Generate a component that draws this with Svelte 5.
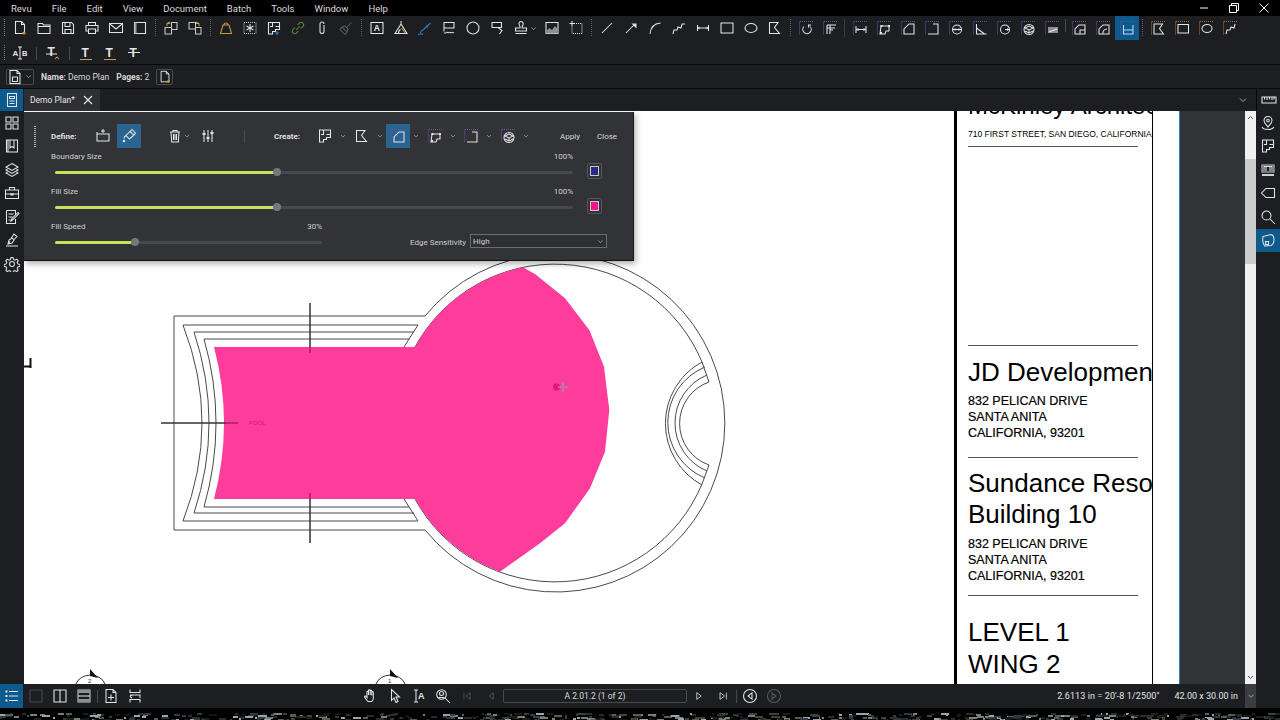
<script>
  const W = '#e4e4e4', D = '#5a5b5e', P = '#6a4fa5', O = '#b56a2c', G = '#c69c3c', B = '#2f7fc4', L = '#b9d9f2';
  const p = (d, c = W, f = false, dash = false) => ({ d, c, f, dash });
  const t = (text, x, y, fs, c = W) => ({ text, x, y, fs, c });
  const circ = (x, y, r) => `M${x - r} ${y}a${r} ${r} 0 1 0 ${2 * r} 0a${r} ${r} 0 1 0 ${-2 * r} 0z`;
  const frame = p('M2 1.5h13M1.5 1.5v13', P, false, true);
  const oframe = p('M2 1.5h13M1.5 1.5v13', O, false, true);

  const icons = {
    newdoc: [p('M3.5 1.5h6l3 3v9h-9zM9.5 1.5v3h3'), p(circ(12, 13, 1.6), G, true)],
    open: [p('M2 3.5h4.5l1 1.5H14v8.5H2zM2 6.5h12')],
    save: [p('M2.5 2.5h9l2 2v9h-11zM5 2.5v4h5v-4M5 13.5v-4h6v4')],
    print: [p('M4.5 5.5v-3h7v3M4.5 11H2V5.5h12V11h-2.5M4.5 9h7v4.5h-7z')],
    mail: [p('M1.5 3.5h13v9h-13zM2 4l6 5 6-5')],
    panel: [p('M2.5 2.5h11v11h-11z'), p('M2.5 2.5h2v11h-2z', '#9a9a9a', true)],
    extract: [p('M8.5 2.5h5.5v7H8.5zM2 7.5h6.5v6.5H2z', '#c9c9c9'), p('M7 2 4 3.5 4 6M4 3.5h3', G)],
    insert: [p('M2 2.5h6.5v6.5H2zM8.5 7.5H14v6.5H8.5z', '#c9c9c9'), p('M9 2l3 1.5V6M12 3.5H9', G)],
    bell: [p('M2.5 13.5h11L11 5H5zM6 5a2 2 0 0 1 4 0', G)],
    snap: [p('M2 2.5h12v11H2z', '#c9c9c9', false, true), p('M8 4v8M4.5 6l7 4M11.5 6l-7 4')],
    plan: [p('M2.5 2.5h11v7h-4v2h-3v2.5h-4zM6.5 2.5v4H4M9.5 6.5h4'), p('M11 11v4M9 13h4', B)],
    link: [p('M6 10l4-4M5 7.5 2.8 9.7a2.5 2.5 0 0 0 3.5 3.5L8.5 11M7.5 5l2.2-2.2a2.5 2.5 0 0 1 3.5 3.5L11 8.5', '#5f8c2e')],
    clip: [p('M10 5v6.5a2 2 0 0 1-4 0V4a2 2 0 0 1 4 0M6 4v7')],
    brush: [p('M13.5 2.5 9 7M4 7l5 5-2 2.5-5-5zM4 7l3-1 3 3-1 3', '#5c5d60')],
    abox: [p('M2 2.5h12v11H2z'), t('A', 4.7, 11, 8.5)],
    angle: [p('M2 13.5h12L8 4zM8 1v3M5.5 13.5a4 4 0 0 1 2-4', W), p('M8.5 8l4 5.5', G)],
    pen: [p('M13.5 3 6 10l-2 1-.5 2.5M9 5.5l2 2', B), p('M1 14.5c2-1 3 0 5-.5', B)],
    cloud: [p('M3 2.5h10v5.5H3zM3 8v3.5'), p('M3 12.5c1 1 1.5 1 2.5 0s1.5 1 2.5 0 1.5 1 2.5 0 1.5 1 2.5 0')],
    poly: [p(circ(8, 8, 6), W, false, false)],
    callout: [p('M3 2.5h9.5v5H3zM9 7.5l4 3-2.5 3.5'), p('M9.5 12l1.5 2.5', W, true)],
    stamp: [p('M8 1.5a2.2 2.2 0 0 1 2.2 2.2c0 1.6-1.2 2-1.2 4.3h4.5v3h-11V8h4.5C7.5 5.7 6 5.300 6 3.700A2 2 0 0 1 8 1.500zM2.500 13.500h11')],
    image: [p('M2 2.500h12v11H2z'), p('M2 11l3.500-3 2.500 2 3-4 3 3v4.500H2z', '#8e8e8e', true)],
    crop: [p('M4 1v5M1.500 3.500h5'), p('M6 3.500h8v10H4v-8', W, false, true)],
    line: [p('M3 13 13 3')],
    arrow: [p('M3 13 11 5'), p('M8.500 3.500h5v5z', W, true)],
    arc: [p('M3 14C3.500 8 7 3.500 13.500 3')],
    polyline: [p('M2 14l1-4h3l1-3 3 1 1-4h3')],
    dim: [p('M2.500 5v6M13.500 5v6M2.500 8h11'), p('M2.500 8l2-1.500v3zM13.500 8l-2-1.500v3z', W, true)],
    rect: [p('M2 3h12v10H2z')],
    ellipse: [p('M2 8a6 4.500 0 1 0 12 0a6 4.500 0 1 0-12 0z')],
    flag: [p('M2.500 2.500h8.500l-3.500 5 5 6h-10z')],
    m_rot: [frame, p('M6 6.500a4.200 4.200 0 1 0 6 0M10.500 7.500V5h2.500')],
    m_post: [frame, p('M5 5h9M5 8h8M5 5v9M8 5v9M8 10h3')],
    m_len: [frame, p('M4 6v7M14 6v7M4 9.500h10'), p('M4 9.500l2.500-1.500v3zM14 9.500l-2.500-1.500v3z', W, true)],
    m_poly: [frame, p('M5 6h8v5l-3 0-1 3H4z'), p('M4 14h2v-2H4zM12 7h2V5h-2zM4.500 7h2V5h-2z', W, true)],
    m_area: [frame, p('M4 14h10V4H9L4 9z')],
    m_open: [frame, p('M4 14h10V4H9')],
    m_dia: [frame, p(circ(9, 9.500, 4.500)), p('M5 9.500h8'), p('M5.500 9.500l2-1.500v3zM12.500 9.500l-2-1.500v3z', W, true)],
    m_ang: [frame, p('M4.500 4v10h10M4.500 8l8 6')],
    m_rad: [frame, p(circ(9, 9.500, 4.500)), p('M9 9.500h4'), p('M13 9.500l-2-1.500v3z', W, true)],
    m_vol: [frame, p(circ(9, 9.500, 5)), p('M5 8l4-2 4 2-4 2zM5 11l4 2 4-2M9 10v3', W)],
    m_sheet: [frame, p('M4 7h10v6H4z', '#8e8e8e', true), p('M5 12l8-3')],
    m_cut: [frame, p('M4 14V9l4-4h6v9zM9 14v-4h5')],
    m_cut2: [frame, p('M4 14V9l4-4h6v9zM8 14a4 4 0 0 1 4-5', W)],
    m_wall: [frame, p('M4.500 5v9h9.500V5M4.500 10h9.500', L)],
    o_flag: [oframe, p('M4 4h8.500l-3 4.500 4 5.500H4z')],
    o_rect: [oframe, p('M4 4.500h10.500v8.500H4z')],
    o_ell: [oframe, p('M4 8.500a5 4 0 1 0 10 0a5 4 0 1 0-10 0z')],
    o_poly: [oframe, p('M4 14l1-4h3l1-3 3 1 1-4')],
    ab: [p('M8 2v12M6 2h4M6 14h4'), t('A', 0.500, 11, 8), t('B', 10, 11, 7.500)],
    t_in: [t('T', 2.500, 11, 12), p('M1 9h11'), p('M10 14l2-2 2 2', G)],
    t_u: [t('T', 3.500, 12, 12), p('M2 14.500h12', '#b9a571')],
    t_u2: [t('T', 3.500, 12, 12), p('M2 14.500h12', G)],
    t_s: [t('T', 3.500, 12, 12), p('M2 7.500h12')],
    docimg: [p('M3 1.500h7l3 3v10H3zM10 1.500v3h3M5.500 8h5v4.500h-5z')],
    sheet: [p('M2.500 1.500h8l3 3v10h-11zM6 8h4v4H6zM5 5h3')],
    grid: [p('M2 2h5v5H2zM9 2h5v5H9zM2 9h5v5H2zM9 9h5v5H9z')],
    book: [p('M2.500 2h11v12h-11zM6 2v8l2-1.500L10 10V2M4 2v12')],
    layers: [p('M8 1.500 14 5l-6 3.500L2 5zM3.500 7 2 8l6 3.500L14 8l-1.500-1M3.500 10 2 11l6 3.500L14 11l-1.500-1')],
    tools: [p('M1.500 5h13v8.500h-13zM5.500 5V2.500h5V5M1.500 9h13M7 8v2h2V8')],
    edit: [p('M2.500 1.500h9v4M11.500 10v4.500h-9v-13M4.500 5h5M4.500 8h4M4.500 11h2M7 12l1-2.500 6-6 1 1-6 6z')],
    sign: [p('M2 14h12M4 12l1-4 3-2 2 2-2 3zM7 6.500 10 2l3 2.500-3.500 3.500M6 9.500l-2 2.500')],
    gear: [p(circ(8, 8, 2.500)), p('M7 1.500h2l.500 2 1.500.700 1.800-1 1.400 1.400-1 1.800.600 1.500 2 .500v2l-2 .500-.600 1.500 1 1.800-1.400 1.400-1.800-1-1.500.600-.500 2H7l-.500-2-1.500-.600-1.800 1-1.400-1.400 1-1.800-.600-1.500-2-.500v-2l2-.500.600-1.500-1-1.800 1.400-1.400 1.800 1L6.500 3.500z')],
    ruler: [p('M1 5h14v6H1zM3.500 5v2.500M6 5v3M8.500 5v2.500M11 5v3M13 5v2.500')],
    pin: [p('M8 1.500a4 4 0 0 1 4 4c0 2.500-2.500 4.500-4 6.500-1.500-2-4-4-4-6.500a4 4 0 0 1 4-4zM2 12c1 2 3 2.500 6 2.500s5-.500 6-2.500'), p(circ(8, 5.500, 1.300))],
    plan2: [p('M2.500 2h11v7.500h-4v2h-3V14h-4zM6.500 2v4.500H4M9.500 6.500h4')],
    stack: [p('M2 3h12v7H2z', '#cfcfcf'), p('M4 9V4.500h8V9M6 4.500V9M10 4.500V9'), p('M2 12h12v2H2z', '#cfcfcf', true)],
    tag: [p('M14.500 3.500H6L1.500 8 6 12.500h8.500z')],
    search: [p(circ(6.500, 6.500, 4.500)), p('M10 10l5 5')],
    shape: [p('M3 4.500 11 2.500c2 .500 3 2 3 5 0 3-1 5-3 6l-6.500.500C3 12 2.500 8 3 4.500z'), p('M5.500 9.500h3v3h-3z')],
    down: [p('M4 6l4 4 4-4', '#cfcfcf')],
    doc: [p('M3.500 1.500h9v13h-9zM5.500 4.500h5v2h-5zM5.500 9h5M5.500 11.500h5')],
    list: [p('M5 3.500h9M5 8h9M5 12.500h9'), p('M1.500 2.500h2v2h-2zM1.500 7h2v2h-2zM1.500 11.500h2v2h-2z', W, true)],
    single: [p('M2 2h12v12H2z', '#48494c')],
    vsplit: [p('M2 2h12v12H2zM8 2v12')],
    hsplit: [p('M2 2h12v12H2z', '#c8c8c8'), p('M2 2h12v3H2zM2 11h12v3H2z', '#8f8f8f', true), p('M2 8h12')],
    docadd: [p('M3 1.500h7l3 3v10H3zM10 1.500v3h3M8 6.500v6M5 9.500h6')],
    spread: [p('M3 1.500v3h10v-3M3 14.500v-3h10v3M3 7h10v3M3 8.500 5 7M3 8.500 5 10')],
    hand: [p('M5 13.500c-1.500-1.500-3-3.500-3.500-5 .500-1 1.500-.500 2.500 1V4c0-1 1.500-1 1.500 0v3V2.500c0-1 1.700-1 1.700 0V7V3c0-1 1.600-1 1.600 0v4.500V4.500c0-1 1.500-1 1.500 0V10c0 2-1 3-1.500 3.500z')],
    cursor: [p('M4.500 1.500v11l2.500-2.500 2 4.500 2-1-2-4.500h3.500z')],
    ibeam: [p('M5 2v12M3 2h4M3 14h4'), t('A', 7, 11, 9)],
    zoom: [p(circ(6.500, 6.500, 4.800)), p('M10 10l5 5M4.500 5.500a2 2 0 0 1 4 0 2 2 0 0 1-4 0zM3.500 9.500h6')],
    first: [p('M4 3.500v9', D), p('M12 3.500v9L6.500 8z', D)],
    prev: [p('M11 4v8L5.500 8z', D)],
    next: [p('M5 3.500v9L11 8z')],
    last: [p('M4 3.500v9L10 8zM12.500 3.500v9')],
    back: [p(circ(8, 8, 6.500)), p('M10 4.800v6.400L6 8z')],
    fwd: [p(circ(8, 8, 6.500), D), p('M6 4.800v6.400L10 8z', D)],
    tagplus: [p('M2 6h12v7H2zM2 6V4M8 1v4M6 3h4')],
    fill: [p('M9 3.500 13 7l-4.500 4L5 7.500zM9 3.500l2-2 3.500 3.500-1.500 2M5 7.500c-1.500 1-2 2-2 3'), p(circ(3, 13, 1.300), W, true)],
    trash: [p('M3 4h10M6 4V2.500h4V4M4 4l.700 10h6.600L12 4M6.500 6v6M9.500 6v6M8 6v6')],
    sliders: [p('M4 2v12M8 2v12M12 2v12'), p('M2.500 5h3v2h-3zM6.500 9h3v2h-3zM10.500 4h3v2h-3z', W, true)],
  };

  const row1 = ['newdoc','open','save','print','mail','panel','|','extract','insert','|','bell','snap','plan','link','clip','brush','|','abox','angle','pen','cloud','poly','callout','STAMP','image','crop','|','line','arrow','arc','polyline','dim','rect','ellipse','flag','|','m_rot','m_post','||','m_len','m_poly','m_area','m_open','m_dia','m_ang','m_rad','m_vol','m_sheet','!','m_cut','m_cut2','*m_wall','|','o_flag','o_rect','o_ell','o_poly'];
  const row2 = ['ab','!','t_in','!','t_u','t_u2','t_s'];
  const menu = ['Revu','File','Edit','View','Document','Batch','Tools','Window','Help'];
  const leftRail = ['grid','book','layers','tools','edit','sign','gear'];
  const rightRail = ['pin','plan2','stack','tag','search','*shape'];
  const createTools = [
    { icon: 'plan2' }, { icon: 'flag' }, { icon: 'm_area', on: true },
    { icon: 'm_poly' }, { icon: 'm_open' }, { icon: 'm_vol' },
  ];

  const sliders = [
    { label: 'Boundary Size', value: '100%', pos: 222 / 518 * 100, swatch: '#2b2a8c' },
    { label: 'Fill Size', value: '100%', pos: 222 / 518 * 100, swatch: '#f0138a' },
  ];

  // tree tops of the desktop wallpaper under the window
  let seed = 17;
  const rnd = () => (seed = (seed * 16807) % 2147483647) / 2147483647;
  const tones = ['#2a2e2a', '#3d443c', '#1c201c', '#565c58', '#7a8078', '#2f3a44', '#9aa4ac', '#151715'];
  const specks = Array.from({ length: 520 }, () => ({
    x: Math.floor(rnd() * 1280),
    y: 5 + Math.floor(rnd() * 7),
    w: 2 + Math.floor(rnd() * 7),
    fill: tones[Math.floor(rnd() * tones.length)],
  }));

  const cx = 555, cy = 423;
</script>

{#snippet ic(name, size = 16)}
  <svg class="ic" width={size} height={size} viewBox="0 0 16 16">
    {#each icons[name] as part}
      {#if part.text}
        <text x={part.x} y={part.y} font-size={part.fs} fill={part.c}>{part.text}</text>
      {:else}
        <path d={part.d} fill={part.f ? part.c : 'none'} stroke={part.f ? 'none' : part.c} stroke-dasharray={part.dash ? '1 1' : null} />
      {/if}
    {/each}
  </svg>
{/snippet}

{#snippet toolRow(items)}
  <i class="grip"></i>
  {#each items as item}
    {#if item === '|'}
      <i class="dots"></i>
    {:else if item === '||'}
      <i class="dots short"></i>
    {:else if item === '!'}
      <i class="bar"></i>
    {:else if item === 'STAMP'}
      <button class="tb stamp">{@render ic('stamp')}{@render ic('down', 9)}</button>
    {:else}
      <button class="tb" class:on={item[0] === '*'}>{@render ic(item.replace('*', ''))}</button>
    {/if}
  {/each}
{/snippet}

<div class="app">
  <nav class="menu">
    {#each menu as m}<span>{m}</span>{/each}
    <div class="winctl">
      <svg width="12" height="12" viewBox="0 0 12 12"><path d="M2 6h8" stroke="#fff" /></svg>
      <svg width="12" height="12" viewBox="0 0 12 12"><path d="M1.500 3.500h7v7h-7zM3.500 3.500v-2h7v7h-2" stroke="#fff" fill="none" /></svg>
      <svg width="12" height="12" viewBox="0 0 12 12"><path d="M1.500 1.500l9 9M10.500 1.500l-9 9" stroke="#fff" /></svg>
    </div>
  </nav>

  <div class="toolbar one">{@render toolRow(row1)}</div>
  <div class="toolbar two">{@render toolRow(row2)}</div>

  <div class="filebar">
    <button class="fbtn">{@render ic('docimg')}{@render ic('down', 9)}</button>
    <span class="fname"><b>Name:</b> Demo Plan</span>
    <span class="fpages"><b>Pages:</b> 2</span>
    <button class="fbtn small">{@render ic('newdoc', 14)}</button>
  </div>

  <div class="tabs">
    <button class="railbtn on">{@render ic('doc')}</button>
    <div class="tab">
      <span>Demo Plan*</span>
      <svg width="10" height="10" viewBox="0 0 10 10"><path d="M1 1l8 8M9 1l-8 8" stroke="#e8e8e8" stroke-width="1.100" /></svg>
    </div>
    <span class="tabs-more">{@render ic('down', 12)}</span>
    <span class="tabs-rail">{@render ic('ruler')}</span>
  </div>

  <div class="main">
    <aside class="rail">
      {#each leftRail as r}<button class="railbtn">{@render ic(r)}</button>{/each}
    </aside>

    <div class="canvas">
      <section class="panel">
        <div class="panel-head">
          <i class="grip tall"></i>
          <strong class="define">Define:</strong>
          <button class="pbtn first">{@render ic('tagplus')}</button>
          <button class="pbtn on second">{@render ic('fill')}</button>
          <span class="trash">{@render ic('trash')}{@render ic('down', 8)}</span>
          <span class="adjust">{@render ic('sliders')}</span>
          <i class="vline"></i>
          <strong class="create">Create:</strong>
          <div class="create-tools">
            {#each createTools as c}
              <div class="ctool">
                <button class="pbtn" class:on={c.on}>{@render ic(c.icon)}</button>
                {@render ic('down', 8)}
              </div>
            {/each}
          </div>
          <span class="act apply">Apply</span>
          <span class="act">Close</span>
        </div>

        {#each sliders as s}
          <div class="srow">
            <div class="slider">
              <div class="slabel"><span>{s.label}</span><span>{s.value}</span></div>
              <div class="track"><div class="fillbar" style="width:{s.pos}%"><i class="thumb"></i></div></div>
            </div>
            <span class="swatch"><i style="background:{s.swatch}"></i></span>
          </div>
        {/each}

        <div class="srow">
          <div class="slider speed">
            <div class="slabel"><span>Fill Speed</span><span>30%</span></div>
            <div class="track"><div class="fillbar" style="width:30%"><i class="thumb"></i></div></div>
          </div>
          <span class="edge">Edge Sensitivity</span>
          <div class="select"><span>High</span>{@render ic('down', 9)}</div>
        </div>
      </section>

      <svg class="drawing" width="930" height="573" viewBox="24 111 930 573">
        <g fill="none" stroke="#4a4a4a" stroke-width="1">
          <path d="M425 316H174V530H425" />
          <path d="M425 316A169 169 0 1 1 425 530" />
          <path d="M415 347A159.500 159.500 0 0 1 702 362M702 484A159.500 159.500 0 0 1 415 499" />
          <path d="M702 362 709 382M702 484 709 465" />
          <path d="M702 362A70 70 0 0 0 702 485M705 367A60 60 0 0 0 705 478M707 375A52 52 0 0 0 707 471M709 382A44 44 0 0 0 709 465" />
          <path d="M183 325H418L404 347M183 521H418L404 499" />
          <path d="M194 332H414M194 513H414M204 339H409M204 507H409" />
          <path d="M183 325Q221 423 183 521M194 332Q224 423 194 513M204 339Q228 423 204 507" />
        </g>
        <path class="fillzone" d="M214 347H415A159.500 159.500 0 0 1 522.700 267.300L535 274 565 298.300 589.300 330 604 366.700 609.300 410 605 451.700 590 488.300 565 523.300 540 543.300 500 571.700A159.500 159.500 0 0 1 415 499H214Q234 423 214 347Z" />
        <g fill="none" stroke="#333" stroke-width="1.500">
          <path d="M310 303V347M310 499V543M161 423H226" />
        </g>
        <path d="M310 347V353M310 493V499M226 423H238" fill="none" stroke="#a81c68" stroke-width="1.500" />
        <text x="249" y="425" class="poollabel">POOL</text>
        <circle cx="556.500" cy="387" r="3.500" fill="#ef0f86" />
        <path d="M558 387H568M563 382V392" stroke="#a98aa0" stroke-width="1.500" />
        <path d="M24 366.500H30.500M30.500 358V368" fill="none" stroke="#111" stroke-width="2" />
        <g fill="none" stroke="#333">
          <path d="M76 684A15 12 0 0 1 105 684M376 684A15 12 0 0 1 405 684" />
        </g>
        <path d="M90 669 98 678 90 676ZM390 669 398 678 390 676Z" fill="#111" />
        <text x="88" y="683" class="cutlabel">2</text>
        <text x="388" y="683" class="cutlabel">1</text>
      </svg>

      <div class="sheet">
        <h1 class="firm">McKinley Architects</h1>
        <p class="firm-addr">710 FIRST STREET, SAN DIEGO, CALIFORNIA 93245</p>
        <hr class="r1" />
        <hr class="r2" />
        <h2 class="jd">JD Development</h2>
        <p class="addr">832 PELICAN DRIVE<br />SANTA ANITA<br />CALIFORNIA, 93201</p>
        <hr class="r3" />
        <h2 class="sun">Sundance Resort<br />Building 10</h2>
        <p class="addr two">832 PELICAN DRIVE<br />SANTA ANITA<br />CALIFORNIA, 93201</p>
        <hr class="r4" />
        <h2 class="lvl">LEVEL 1<br />WING 2<br />FLOOR PLAN</h2>
      </div>
      <div class="margin"></div>
      <div class="paste"></div>
    </div>

    <div class="vscroll">
      <svg width="11" height="11" viewBox="0 0 11 11"><path d="M3 7l2.500-2.500L8 7" fill="none" stroke="#555" /></svg>
      <i class="vthumb"></i>
      <svg class="vdown" width="11" height="11" viewBox="0 0 11 11"><path d="M3 4l2.500 2.500L8 4" fill="none" stroke="#555" /></svg>
    </div>

    <aside class="rail right">
      {#each rightRail as r}
        <button class="railbtn" class:on={r[0] === '*'}>{@render ic(r.replace('*', ''))}</button>
      {/each}
    </aside>
  </div>

  <footer class="status">
    <button class="railbtn on wide">{@render ic('list')}</button>
    <div class="s-left">
      <button class="tb">{@render ic('single')}</button>
      <button class="tb">{@render ic('vsplit')}</button>
      <button class="tb">{@render ic('hsplit')}</button>
      <i class="bar"></i>
      <button class="tb">{@render ic('docadd')}</button>
      <button class="tb">{@render ic('spread')}</button>
    </div>
    <div class="s-mid">
      <button class="tb">{@render ic('hand')}</button>
      <button class="tb">{@render ic('cursor')}</button>
      <button class="tb">{@render ic('ibeam')}</button>
      <button class="tb">{@render ic('zoom')}</button>
      <button class="tb">{@render ic('first', 12)}</button>
      <button class="tb">{@render ic('prev', 12)}</button>
      <div class="pagebox">A 2.01.2 (1 of 2)</div>
      <button class="tb">{@render ic('next', 12)}</button>
      <button class="tb">{@render ic('last', 12)}</button>
      <i class="bar"></i>
      <button class="tb">{@render ic('back')}</button>
      <button class="tb">{@render ic('fwd')}</button>
    </div>
    <span class="scale">2.6113 in = 20'-8 1/2500"</span>
    <span class="size">42.00 x 30.00 in</span>
    <span class="s-more">{@render ic('down', 10)}</span>
  </footer>

  <svg class="wallpaper" width="1280" height="12" viewBox="0 0 1280 12">
    {#each specks as s}
      <rect x={s.x} y={s.y} width={s.w} height="2" fill={s.fill} />
    {/each}
  </svg>
</div>

<style>
  :global(body) {
    margin: 0;
    background: #000;
  }

  .app {
    width: 1280px;
    height: 720px;
    overflow: hidden;
    display: flex;
    flex-direction: column;
    font-family: Roboto, "Liberation Sans", sans-serif;
    font-size: 9px;
    color: #e6e6e6;
    background: #000;
  }

  button {
    padding: 0;
    border: 0;
    background: none;
    color: inherit;
    font: inherit;
    display: flex;
    align-items: center;
    justify-content: center;
  }

  i {
    display: block;
  }

  .ic {
    display: block;
    flex: none;
    stroke-width: 1.050;
  }

  .ic text {
    font-family: "Liberation Sans", sans-serif;
    font-weight: 700;
  }

  .menu {
    height: 16px;
    flex: none;
    display: flex;
    align-items: center;
    background: #000;
    padding-left: 11px;
    font-size: 9.500px;
    color: #ddd;
  }

  .menu span {
    margin-right: 20px;
  }

  .winctl {
    margin-left: auto;
    display: flex;
    gap: 18px;
    padding-right: 10px;
  }

  .toolbar {
    flex: none;
    display: flex;
    align-items: center;
    background: #1c1e22;
    padding-left: 4px;
  }

  .toolbar.one {
    height: 26px;
    align-items: flex-start;
  }

  .toolbar.two {
    height: 22px;
    border-bottom: 1px solid #08090a;
  }

  .toolbar.one .grip {
    margin-top: 3px;
  }

  .toolbar.one .tb {
    height: 24px;
  }

  .toolbar.one .dots,
  .toolbar.one .bar {
    margin-top: 3px;
  }

  .grip {
    width: 1px;
    height: 18px;
    flex: none;
    margin-right: 3px;
    background: repeating-linear-gradient(#77787a 0 1px, transparent 1px 2px);
  }

  .tb {
    width: 24px;
    height: 22px;
    flex: none;
  }

  .tb.stamp {
    width: 31px;
    padding-left: 2px;
    gap: 0;
  }

  .tb.on {
    background: #0f5a8c;
  }

  .dots {
    width: 1px;
    height: 18px;
    flex: none;
    margin: 0 3px;
    background: repeating-linear-gradient(#5c5d60 0 1px, transparent 1px 2px);
  }

  .dots.short {
    width: 1px;
    margin: 0 3px 0 2px;
    background: #3c3d40;
  }

  .bar {
    width: 1px;
    height: 13px;
    flex: none;
    margin: 0 1px;
    background: #47484b;
  }

  .toolbar.two .grip {
    height: 16px;
  }

  .toolbar.two .bar {
    margin: 0 4px;
  }

  .filebar {
    height: 23px;
    flex: none;
    display: flex;
    align-items: center;
    background: #1c1e22;
    border-bottom: 1px solid #08090a;
    padding-left: 6px;
    font-size: 8.500px;
    color: #d8d8d8;
  }

  .fbtn {
    width: 28px;
    height: 16px;
    border: 1px solid #4a4b4e;
    border-radius: 2px;
    box-sizing: border-box;
    gap: 1px;
  }

  .fbtn.small {
    width: 17px;
    margin-left: 7px;
  }

  .fname {
    margin-left: 7px;
  }

  .fpages {
    margin-left: 7px;
  }

  .tabs {
    height: 22px;
    flex: none;
    display: flex;
    align-items: stretch;
    background: #1c1e22;
  }

  .railbtn {
    width: 24px;
    height: 23.500px;
    flex: none;
  }

  .railbtn.on {
    background: #0f5a8c;
  }

  .tabs .railbtn {
    width: 23px;
    height: 22px;
  }

  .tab {
    width: 76px;
    margin-left: 1px;
    display: flex;
    align-items: center;
    justify-content: space-between;
    padding: 0 7px 0 6px;
    box-sizing: border-box;
    background: #2d2f33;
    font-size: 8.500px;
  }

  .tabs-more {
    margin-left: auto;
    display: flex;
    align-items: center;
    padding-right: 7px;
  }

  .tabs-rail {
    width: 23px;
    display: flex;
    align-items: center;
    justify-content: center;
    border-left: 1px solid #08090a;
  }

  .main {
    height: 573px;
    flex: none;
    display: flex;
  }

  .rail {
    width: 24px;
    flex: none;
    background: #1c1e22;
  }

  .rail.right {
    background: #1c1e22;
  }

  .canvas {
    position: relative;
    width: 1221px;
    flex: none;
    display: flex;
    background: #fff;
    overflow: hidden;
  }

  .drawing {
    display: block;
    flex: none;
  }

  .fillzone {
    fill: #fd3c9b;
  }

  .poollabel {
    font: 6px "Liberation Sans", sans-serif;
    fill: #cf1a82;
  }

  .cutlabel {
    font: 6px "Liberation Sans", sans-serif;
    fill: #333;
  }

  .panel {
    position: absolute;
    left: 0;
    top: 1px;
    z-index: 2;
    width: 610px;
    height: 149px;
    box-sizing: border-box;
    background: #323337;
    border-bottom: 1px solid #0d0e10;
    border-right: 1px solid #17181a;
    box-shadow: 2px 3px 6px rgba(0, 0, 0, 0.3);
    font-size: 8px;
    color: #d0d0d0;
  }

  .panel-head {
    height: 24px;
    margin-top: 6px;
    display: flex;
    align-items: center;
    padding-right: 15px;
    padding-top: 6px;
  }

  .grip.tall {
    height: 21px;
    width: 2px;
    margin: 0 0 0 10px;
    background: repeating-linear-gradient(#b0b0b0 0 1px, transparent 1px 2px);
  }

  .panel-head strong {
    font-weight: 700;
    color: #e0e0e0;
  }

  .define {
    margin-left: 15px;
    width: 30px;
  }

  .pbtn {
    width: 24px;
    height: 24px;
    flex: none;
  }

  .pbtn.on {
    background: #2a6491;
  }

  .pbtn.first {
    margin-left: 10px;
  }

  .pbtn.second {
    margin-left: 2px;
  }

  .trash {
    display: flex;
    align-items: center;
    margin-left: 26px;
  }

  .adjust {
    margin-left: 9px;
  }

  .vline {
    width: 1px;
    height: 13px;
    margin-left: 28px;
    background: #4b4c50;
  }

  .create {
    margin-left: 29px;
    width: 31px;
  }

  .create-tools {
    margin-left: 8px;
    display: flex;
    gap: 2.500px;
  }

  .ctool {
    display: flex;
    align-items: center;
    gap: 2px;
  }

  .act {
    color: #d6d6d6;
    width: 21px;
  }

  .apply {
    margin-left: auto;
    margin-right: 16px;
  }

  .srow {
    display: flex;
    align-items: flex-end;
    height: 35px;
    padding-left: 27px;
  }

  .panel-head + .srow {
    margin-top: 3px;
  }

  .slider {
    width: 522px;
    height: 30px;
    flex: none;
    align-self: flex-start;
  }

  .slider.speed {
    width: 271px;
  }

  .slabel {
    display: flex;
    justify-content: space-between;
    height: 12px;
    line-height: 12px;
  }

  .track {
    height: 3px;
    margin: 7.500px 0 0 4px;
    background: #47484c;
    border-radius: 2px;
  }

  .fillbar {
    position: relative;
    height: 100%;
    background: #c8e05c;
    border-radius: 2px;
  }

  .thumb {
    position: absolute;
    right: -4px;
    top: -3px;
    width: 8px;
    height: 8px;
    border-radius: 50%;
    background: #76777b;
  }

  .swatch {
    align-self: flex-start;
    margin: 12px 0 0 14px;
    width: 15px;
    height: 16px;
    box-sizing: border-box;
    border: 1px solid #55565a;
    border-radius: 2px;
    padding: 2px;
    display: flex;
  }

  .swatch i {
    flex: 1;
    border: 1px solid #c9c9c9;
  }

  .edge {
    align-self: flex-start;
    margin: 16px 0 0 88px;
    line-height: 12px;
    white-space: nowrap;
  }

  .select {
    align-self: flex-start;
    width: 137px;
    height: 14px;
    margin: 13px 0 0 4px;
    box-sizing: border-box;
    border: 1px solid #6c6d70;
    display: flex;
    align-items: center;
    justify-content: space-between;
    padding: 0 1px 0 2px;
    background: #2e2f33;
  }

  .sheet {
    width: 199px;
    height: 573px;
    flex: none;
    box-sizing: border-box;
    overflow: hidden;
    border-left: 3px solid #000;
    border-right: 1.500px solid #000;
    padding: 0 14px 0 11px;
    color: #000;
    font-family: "Liberation Sans Narrow", "Liberation Sans", sans-serif;
  }

  .sheet h1,
  .sheet h2,
  .sheet p {
    margin: 0;
    font-weight: 400;
    white-space: nowrap;
  }

  .sheet hr {
    border: 0;
    margin: 0;
    height: 1px;
    background: #555;
  }

  .firm {
    font-size: 24px;
    line-height: 24px;
    margin-top: -17px !important;
  }

  .firm-addr {
    font-size: 8.500px;
    line-height: 10px;
    margin-top: 11px !important;
  }

  .r1 { margin-top: 7px !important; }
  .r2 { margin-top: 198px !important; }
  .r3 { margin-top: 16px !important; }
  .r4 { margin-top: 11px !important; }

  .jd {
    font-size: 26px;
    line-height: 30px;
    margin-top: 11px !important;
  }

  .sun {
    font-size: 26px;
    line-height: 31px;
    margin-top: 10px !important;
  }

  .addr {
    font-size: 12.500px;
    line-height: 16px;
    margin-top: 6px !important;
    -webkit-text-stroke: 0.200px #000;
  }

  .addr.two {
    margin-top: 6px !important;
  }

  .lvl {
    font-size: 26px;
    line-height: 32px;
    margin-top: 20px !important;
  }

  .margin {
    width: 26px;
    flex: none;
    border-right: 1px solid #2a7fc0;
    background: #fff;
  }

  .paste {
    flex: 1;
    background: #323337;
  }

  .vscroll {
    width: 11px;
    flex: none;
    background: #f0f0f0;
    display: flex;
    flex-direction: column;
  }

  .vscroll svg {
    display: block;
    margin-top: 1px;
  }

  .vthumb {
    height: 105px;
    margin-top: 36px;
    background: #cdcdcd;
  }

  .vdown {
    margin-top: auto !important;
    margin-bottom: 1px;
  }

  .status {
    height: 24px;
    flex: none;
    display: flex;
    align-items: center;
    background: #1c1e22;
  }

  .railbtn.wide {
    width: 23px;
    height: 24px;
  }

  .s-left {
    display: flex;
    align-items: center;
    margin-left: 1px;
  }

  .s-mid {
    position: relative;
    display: flex;
    align-items: center;
    margin-left: 212px;
  }

  .pagebox {
    width: 184px;
    height: 14px;
    box-sizing: border-box;
    border: 1px solid #48494c;
    border-radius: 2px;
    text-align: center;
    line-height: 12px;
    margin: 0 0 0 0;
    font-size: 8.500px;
    color: #ddd;
  }

  .scale {
    margin-left: auto;
    font-size: 9px;
    letter-spacing: 0.100px;
  }

  .size {
    margin-left: 15px;
    font-size: 9px;
  }

  .s-more {
    width: 11px;
    height: 24px;
    margin-left: 7px;
    margin-right: 24px;
    display: flex;
    align-items: center;
    justify-content: center;
    background: #3a3c40;
  }

  .wallpaper {
    display: block;
    flex: none;
  }
</style>
